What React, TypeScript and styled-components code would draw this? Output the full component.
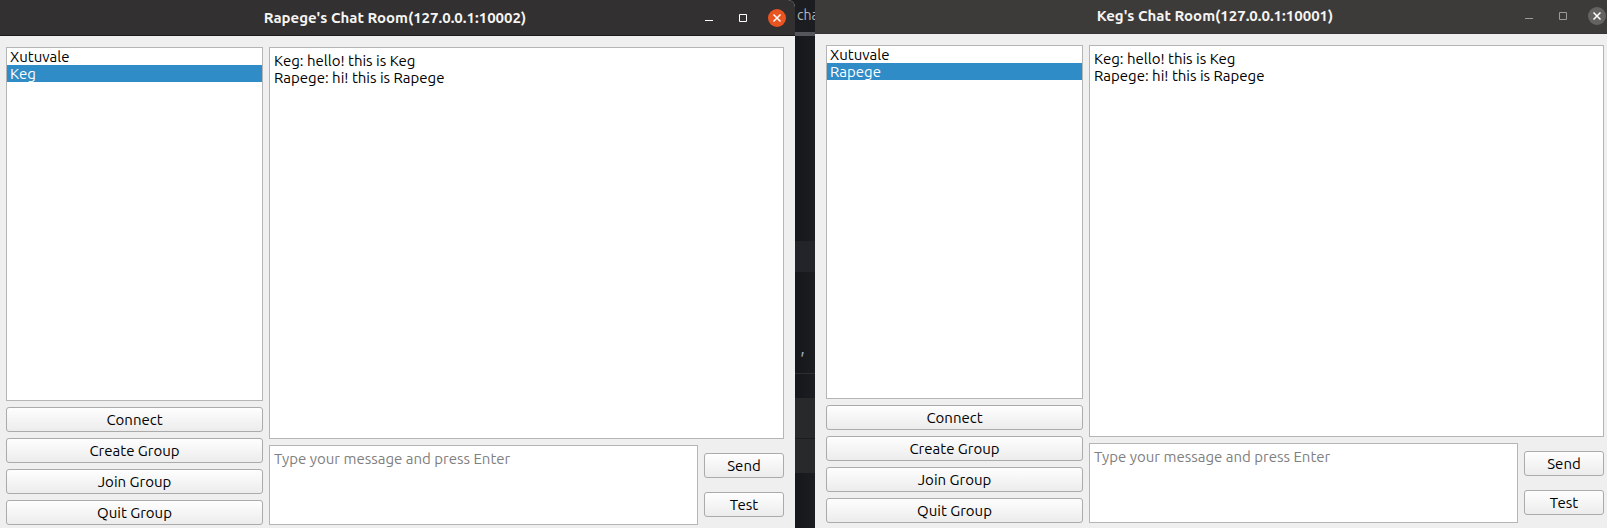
import React, { useState } from "react";
import styled, { createGlobalStyle } from "styled-components";

const GlobalStyle = createGlobalStyle`
  *, *::before, *::after { box-sizing: border-box; }
  body {
    margin: 0;
    overflow: hidden;
    background: #1b1c1f;
    font-family: Ubuntu, "Noto Sans", sans-serif;
    font-size: 15px;
    line-height: 17px;
    color: #000;
  }
  button, textarea { font: inherit; color: inherit; margin: 0; }
`;

const Desktop = styled.main`
  display: grid;
  grid-template-columns: minmax(0, 1fr) 20px minmax(0, 1fr);
  height: 100vh;
  margin: 0 -8px 0 -5px;
  overflow: hidden;
`;

const Frame = styled.section<{ $raised?: boolean }>`
  display: flex;
  flex-direction: column;
  height: calc(100vh + 8px);
  margin-top: ${(p) => (p.$raised ? "-2px" : "0")};
  border-radius: ${(p) => (p.$raised ? "0" : "0 7px 0 0")};
  background: #efefef;
  overflow: hidden;
`;

const TitleBar = styled.header<{ $active: boolean }>`
  display: grid;
  grid-template-columns: 1fr auto 1fr;
  align-items: center;
  height: 36px;
  flex: none;
  padding: 0 9px;
  background: ${(p) => (p.$active ? "#323030" : "#3d3b3a")};
  border-bottom: 1px solid ${(p) => (p.$active ? "#1c1a1b" : "#383637")};
`;

const Title = styled.h1`
  grid-column: 2;
  margin: 0;
  font-size: 15px;
  line-height: 17px;
  font-weight: 700;
  color: #f5f4f2;
  white-space: nowrap;
`;

const Controls = styled.div`
  display: flex;
  justify-content: flex-end;
  gap: 16px;
`;

const ControlButton = styled.button<{ $color: string; $fill?: string }>`
  width: 18px;
  height: 18px;
  padding: 0;
  border: 0;
  border-radius: 50%;
  color: ${(p) => p.$color};
  background: ${(p) => p.$fill ?? "transparent"};

  svg { display: block; }
`;

const Content = styled.div`
  display: grid;
  grid-template-columns: minmax(0, 257fr) minmax(0, 515fr);
  gap: 6px;
  flex: 1;
  min-height: 0;
  padding: 11px;
`;

const Column = styled.div`
  display: flex;
  flex-direction: column;
  gap: 6px;
  min-height: 0;
`;

const PeerList = styled.ul`
  flex: 1;
  margin: 0;
  padding: 0;
  list-style: none;
  background: #fff;
  border: 1px solid #b5b5b5;
`;

const Peer = styled.li<{ $selected: boolean }>`
  height: 17px;
  padding: 0 3px;
  color: ${(p) => (p.$selected ? "#fff" : "#000")};
  background: ${(p) => (p.$selected ? "#308cc6" : "transparent")};
`;

const PushButton = styled.button`
  height: 25px;
  flex: none;
  padding: 0 8px;
  border: 1px solid #ababab;
  border-radius: 3px;
  background: linear-gradient(#fefefe, #ececec);
  text-align: center;
  line-height: 17px;
`;

const Log = styled.div`
  flex: 1;
  padding: 4px;
  background: #fff;
  border: 1px solid #b5b5b5;

  p { margin: 0; }
`;

const Composer = styled.form`
  display: grid;
  grid-template-columns: minmax(0, 1fr) 80px;
  gap: 6px;
  height: 80px;
  flex: none;
`;

const MessageBox = styled.textarea`
  padding: 4px;
  border: 1px solid #b5b5b5;
  border-radius: 0;
  background: #fff;
  resize: none;
  outline: none;

  &::placeholder { color: #808080; opacity: 1; }
`;

const Actions = styled.div`
  display: flex;
  flex-direction: column;
  justify-content: center;
  gap: 14px;
`;

const Backdrop = styled.div`
  display: flex;
  flex-direction: column;
  overflow: hidden;
  background: linear-gradient(90deg, #15171a, #1c1d20);
`;

const TabLabel = styled.div`
  height: 36px;
  flex: none;
  padding: 7px 2px;
  border-bottom: 4px solid #55565b;
  background: #1b1d21;
  color: #b4b5b7;
  font-size: 14px;
  white-space: nowrap;
`;

const Strip = styled.div<{ $height: number; $fill?: string; $line?: string }>`
  height: ${(p) => p.$height}px;
  flex: none;
  background: ${(p) => p.$fill ?? "transparent"};
  border-bottom: ${(p) => (p.$line ? `1px solid ${p.$line}` : "0")};
`;

const CodeLine = styled(Strip)`
  padding: 0 2px;
  color: #9fb0c4;
  font-family: "Liberation Mono", monospace;
  font-style: italic;
  line-height: 20px;
`;

const Minimize = () => (
  <svg width="18" height="18" aria-hidden="true">
    <path d="M5 11h8v1H5z" fill="currentColor" />
  </svg>
);

const Maximize = () => (
  <svg width="18" height="18" aria-hidden="true">
    <path d="M5.5 5.5h7v7h-7z" fill="none" stroke="currentColor" />
  </svg>
);

const Close = () => (
  <svg width="18" height="18" aria-hidden="true">
    <path d="M5.5 5.5l7 7m0-7l-7 7" stroke="currentColor" strokeWidth="1.5" />
  </svg>
);

const peerActions = ["Connect", "Create Group", "Join Group", "Quit Group"];
const messages = ["Keg: hello! this is Keg", "Rapege: hi! this is Rapege"];

type ChatWindowProps = {
  title: string;
  peers: string[];
  active?: boolean;
};

function ChatWindow({ title, peers, active = false }: ChatWindowProps) {
  const [selected, setSelected] = useState(peers[1]);
  const [draft, setDraft] = useState("");
  const glyph = active ? "#fff" : "#9b9a98";

  return (
    <Frame $raised={!active} aria-label={title}>
      <TitleBar $active={active}>
        <Title>{title}</Title>
        <Controls>
          <ControlButton type="button" aria-label="Minimize" $color={glyph}>
            <Minimize />
          </ControlButton>
          <ControlButton type="button" aria-label="Maximize" $color={glyph}>
            <Maximize />
          </ControlButton>
          <ControlButton
            type="button"
            aria-label="Close"
            $color="#fff"
            $fill={active ? "#e95420" : "#646362"}
          >
            <Close />
          </ControlButton>
        </Controls>
      </TitleBar>
      <Content>
        <Column>
          <PeerList role="listbox" aria-label="Peers">
            {peers.map((peer) => (
              <Peer
                key={peer}
                role="option"
                aria-selected={peer === selected}
                $selected={peer === selected}
                onClick={() => setSelected(peer)}
              >
                {peer}
              </Peer>
            ))}
          </PeerList>
          {peerActions.map((label) => (
            <PushButton key={label} type="button">
              {label}
            </PushButton>
          ))}
        </Column>
        <Column>
          <Log role="log">
            {messages.map((line) => (
              <p key={line}>{line}</p>
            ))}
          </Log>
          <Composer onSubmit={(e) => e.preventDefault()}>
            <MessageBox
              aria-label="Message"
              placeholder="Type your message and press Enter"
              value={draft}
              onChange={(e) => setDraft(e.target.value)}
            />
            <Actions>
              <PushButton type="submit">Send</PushButton>
              <PushButton type="button">Test</PushButton>
            </Actions>
          </Composer>
        </Column>
      </Content>
    </Frame>
  );
}

export default function App() {
  return (
    <>
      <GlobalStyle />
      <Desktop>
        <ChatWindow title="Rapege's Chat Room(127.0.0.1:10002)" peers={["Xutuvale", "Keg"]} active />
        <Backdrop>
          <TabLabel>cha</TabLabel>
          <Strip $height={205} />
          <Strip $height={31} $fill="#22242a" />
          <Strip $height={78} />
          <CodeLine $height={24} $line="#2c2e31">'</CodeLine>
          <Strip $height={24} />
          <Strip $height={41} $fill="#27292b" $line="#1b1c1f" />
          <Strip $height={34} $fill="#27292b" />
        </Backdrop>
        <ChatWindow title="Keg's Chat Room(127.0.0.1:10001)" peers={["Xutuvale", "Rapege"]} />
      </Desktop>
    </>
  );
}
